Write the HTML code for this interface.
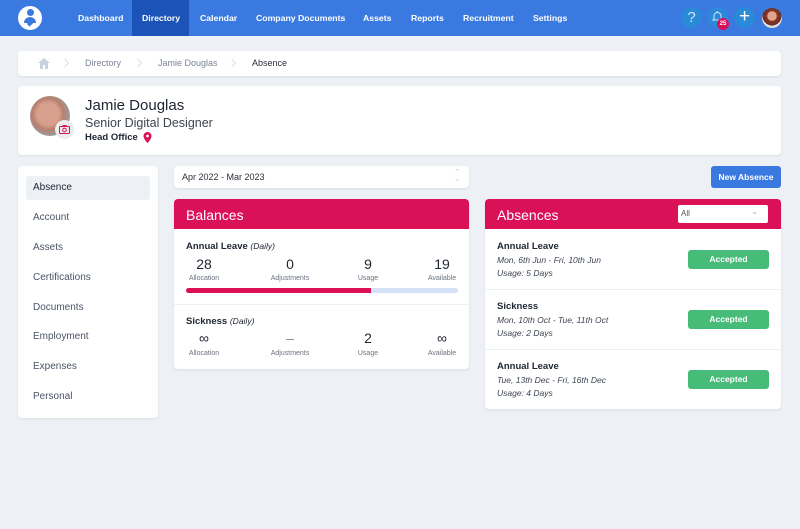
<!DOCTYPE html>
<html><head><meta charset="utf-8"><style>
*{box-sizing:border-box;margin:0;padding:0}
body{width:800px;height:529px;background:#edf1f6;font-family:"Liberation Sans",sans-serif;color:#1f2633;position:relative;overflow:hidden}
.a{position:absolute}
.nav{left:0;top:0;width:800px;height:36px;background:#3a7ae0}
.nl{position:absolute;top:13px;font-size:8.7px;font-weight:bold;color:#fff}
.card{position:absolute;background:#fff;border-radius:4px;box-shadow:0 1px 2px rgba(0,0,0,.08)}
.side{font-size:10px;color:#4b5466;position:absolute;left:33px}
.hdr{position:absolute;left:0;top:0;right:0;height:30px;background:#db1158;border-radius:4px 4px 0 0;color:#fff;font-size:14px;padding:8px 12px}
.num{position:absolute;font-size:14px;text-align:center;width:60px}
.lab{position:absolute;font-size:7px;color:#6b7280;text-align:center;width:60px}
.btn{position:absolute;left:203px;width:81px;height:19px;background:#47bb78;color:#fff;border-radius:3px;font-size:8.5px;font-weight:bold;text-align:center;line-height:19px}
.t{position:absolute;left:12px;font-size:9.5px;font-weight:bold}
.i{position:absolute;left:12px;font-size:8.5px;font-style:italic;color:#3d4452}
.ic{position:absolute;top:7px;width:21px;height:21px;border-radius:50%;background:#2a8ad8}
.chev{position:absolute;top:5px;width:6px;height:6px;border-top:1px solid #dde1e7;border-right:1px solid #dde1e7;transform:rotate(45deg);margin-top:4px}
</style></head><body>
<div class="a nav">
 <div class="a" style="left:18px;top:6px;width:24px;height:24px;border-radius:50%;background:#fff"></div>
 <div class="a" style="left:26.5px;top:9px;width:7px;height:7px;border-radius:50%;background:#3a7ae0"></div>
 <div class="a" style="left:24px;top:17px;width:12px;height:6px;border-radius:6px 6px 0 0;background:#3a7ae0"></div>
 <div class="a" style="left:28px;top:21px;width:4px;height:5px;background:#3a7ae0;transform:rotate(45deg)"></div>
 <div class="a" style="left:132px;top:0;width:57px;height:36px;background:#1c53b8"></div>
 <span class="nl" style="left:78px">Dashboard</span>
 <span class="nl" style="left:142px">Directory</span>
 <span class="nl" style="left:200px">Calendar</span>
 <span class="nl" style="left:256px">Company Documents</span>
 <span class="nl" style="left:363px">Assets</span>
 <span class="nl" style="left:411px">Reports</span>
 <span class="nl" style="left:463px">Recruitment</span>
 <span class="nl" style="left:533px">Settings</span>
 <div class="ic" style="left:681px;color:#cfe3ff;font-size:15px;text-align:center;line-height:21px">?</div>
 <div class="ic" style="left:707px"></div>
 <svg class="a" style="left:711px;top:10px" width="13" height="13" viewBox="0 0 13 13"><path d="M3 9V6a3.5 3.5 0 0 1 7 0v3l1 1H2z M6 2V1" stroke="#cfe3ff" fill="none" stroke-width="1"/></svg>
 <div class="a" style="left:717px;top:18px;width:12px;height:12px;border-radius:50%;background:#db1158;color:#fff;font-size:6px;font-weight:bold;text-align:center;line-height:12px">25</div>
 <div class="ic" style="left:734px;color:#fff;font-size:19px;text-align:center;line-height:20px">+</div>
 <div class="a" style="left:762px;top:8px;width:20px;height:20px;border-radius:50%;background:radial-gradient(circle at 50% 40%,#e0a58a 0 30%,#8a3a2a 31%,#6a2a1e 60%,#ddd 61%)"></div>
</div>
<div class="card" style="left:18px;top:51px;width:763px;height:25px">
 <svg class="a" style="left:20px;top:7px" width="12" height="11" viewBox="0 0 12 11"><path d="M6 0L0 5h2v6h3V7h2v4h3V5h2z" fill="#c9d1dc"/></svg>
 <div class="chev" style="left:44px"></div>
 <span class="a" style="left:67px;top:7px;font-size:9px;color:#7b8494">Directory</span>
 <div class="chev" style="left:117px"></div>
 <span class="a" style="left:140px;top:7px;font-size:9px;color:#7b8494">Jamie Douglas</span>
 <div class="chev" style="left:211px"></div>
 <span class="a" style="left:234px;top:7px;font-size:9px;color:#2a2f3a">Absence</span>
</div>
<div class="card" style="left:18px;top:86px;width:763px;height:69px">
 <div class="a" style="left:12px;top:10px;width:40px;height:40px;border-radius:50%;background:radial-gradient(circle at 45% 45%,#d8a08c 0 35%,#b88070 50%,#9a9a9a 70%,#c8c8c8)"></div>
 <div class="a" style="left:37px;top:34px;width:19px;height:19px;border-radius:50%;background:#ececec"></div>
 <svg class="a" style="left:41px;top:39px" width="11" height="9" viewBox="0 0 11 9"><rect x="0.5" y="1.5" width="10" height="7" rx="1" fill="none" stroke="#db1158"/><circle cx="5.5" cy="5" r="1.8" fill="none" stroke="#db1158"/><rect x="3.5" y="0" width="4" height="2" fill="#db1158"/></svg>
 <span class="a" style="left:67px;top:11px;font-size:15px">Jamie Douglas</span>
 <span class="a" style="left:67px;top:30px;font-size:12.5px;color:#3d4452">Senior Digital Designer</span>
 <span class="a" style="left:67px;top:46px;font-size:9.5px;font-weight:bold">Head Office</span>
 <svg class="a" style="left:125px;top:46px" width="9" height="11" viewBox="0 0 9 11"><path d="M4.5 0A4 4 0 0 0 .5 4c0 3 4 7 4 7s4-4 4-7a4 4 0 0 0-4-4z" fill="#db1158"/><circle cx="4.5" cy="4" r="1.4" fill="#fff"/></svg>
</div>
<div class="card" style="left:18px;top:166px;width:140px;height:252px">
 <div class="a" style="left:8px;top:10px;width:124px;height:24px;background:#edf1f6;border-radius:3px"></div>
</div>
<span class="side" style="top:182px;color:#1f2633">Absence</span>
<span class="side" style="top:212px">Account</span>
<span class="side" style="top:242px">Assets</span>
<span class="side" style="top:272px">Certifications</span>
<span class="side" style="top:302px">Documents</span>
<span class="side" style="top:331px">Employment</span>
<span class="side" style="top:361px">Expenses</span>
<span class="side" style="top:391px">Personal</span>
<div class="card" style="left:174px;top:166px;width:295px;height:22px">
 <span class="a" style="left:8px;top:6px;font-size:9px;color:#2a2f3a">Apr 2022 - Mar 2023</span>
 <span class="a" style="left:280px;top:3px;font-size:7px;color:#c0c6d0;line-height:7px">⌃<br>⌄</span>
</div>
<div class="a" style="left:711px;top:166px;width:70px;height:22px;background:#3a7ae0;border-radius:3px;color:#fff;font-size:8.5px;font-weight:bold;text-align:center;line-height:22px">New Absence</div>
<div class="card" style="left:174px;top:199px;width:295px;height:170px">
 <div class="hdr">Balances</div>
 <span class="a" style="left:12px;top:42px;font-size:9.5px;font-weight:bold">Annual Leave <i style="font-weight:normal;font-size:8.5px">(Daily)</i></span>
 <div class="num" style="left:0;top:57px">28</div><div class="lab" style="left:0;top:76px">Allocation</div>
 <div class="num" style="left:86px;top:57px">0</div><div class="lab" style="left:86px;top:76px">Adjustments</div>
 <div class="num" style="left:164px;top:57px">9</div><div class="lab" style="left:164px;top:76px">Usage</div>
 <div class="num" style="left:238px;top:57px">19</div><div class="lab" style="left:238px;top:76px">Available</div>
 <div class="a" style="left:12px;top:89px;width:272px;height:5px;background:#d5e1f5;border-radius:3px"></div>
 <div class="a" style="left:12px;top:89px;width:185px;height:5px;background:#db1158;border-radius:3px 0 0 3px"></div>
 <div class="a" style="left:0;top:105px;width:295px;height:1px;background:#eef0f3"></div>
 <span class="a" style="left:12px;top:117px;font-size:9.5px;font-weight:bold">Sickness <i style="font-weight:normal;font-size:8.5px">(Daily)</i></span>
 <div class="num" style="left:0;top:131px">∞</div><div class="lab" style="left:0;top:151px">Allocation</div>
 <div class="num" style="left:86px;top:131px;color:#888">–</div><div class="lab" style="left:86px;top:151px">Adjustments</div>
 <div class="num" style="left:164px;top:131px">2</div><div class="lab" style="left:164px;top:151px">Usage</div>
 <div class="num" style="left:238px;top:131px">∞</div><div class="lab" style="left:238px;top:151px">Available</div>
</div>
<div class="card" style="left:485px;top:199px;width:296px;height:210px">
 <div class="hdr">Absences</div>
 <div class="a" style="left:193px;top:6px;width:90px;height:18px;background:#fff;border-radius:2px;font-size:8px;color:#555;padding:4px 3px">All<span style="position:absolute;right:10px;top:2px;color:#aaa">⌄</span></div>
 <span class="t" style="top:42px">Annual Leave</span><span class="i" style="top:56px">Mon, 6th Jun - Fri, 10th Jun</span><span class="i" style="top:69px">Usage: 5 Days</span>
 <div class="btn" style="top:51px">Accepted</div>
 <div class="a" style="left:0;top:90px;width:296px;height:1px;background:#eef0f3"></div>
 <span class="t" style="top:102px">Sickness</span><span class="i" style="top:116px">Mon, 10th Oct - Tue, 11th Oct</span><span class="i" style="top:129px">Usage: 2 Days</span>
 <div class="btn" style="top:111px">Accepted</div>
 <div class="a" style="left:0;top:150px;width:296px;height:1px;background:#eef0f3"></div>
 <span class="t" style="top:162px">Annual Leave</span><span class="i" style="top:176px">Tue, 13th Dec - Fri, 16th Dec</span><span class="i" style="top:189px">Usage: 4 Days</span>
 <div class="btn" style="top:171px">Accepted</div>
</div>
</body></html>
